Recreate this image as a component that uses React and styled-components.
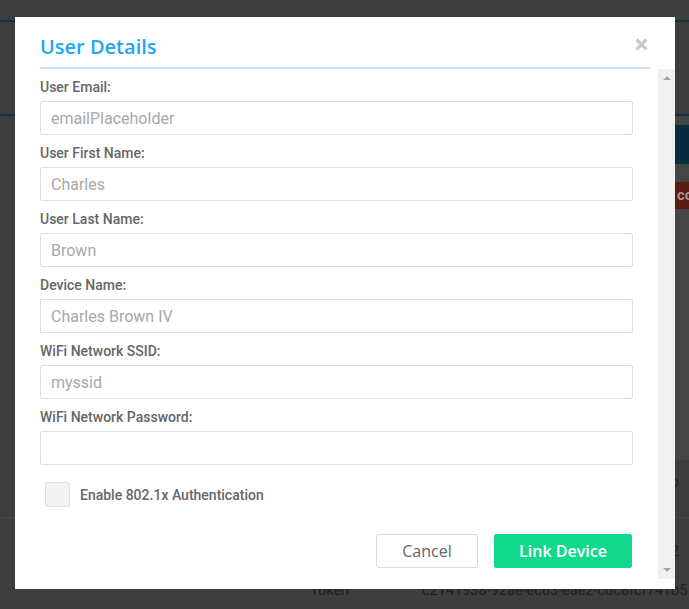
import React from "react";
import styled, { createGlobalStyle } from "styled-components";

const GlobalStyle = createGlobalStyle`
  html, body {
    margin: 0;
    padding: 0;
    background: #3d3d3d;
    overflow: hidden;
  }
  * {
    box-sizing: border-box;
  }
`;

/* the page that lies under the dimmed overlay */
const Page = styled.div`
  width: 100%;
  height: 609px;
  overflow: hidden;
  font-family: Roboto, "Liberation Sans", sans-serif;
  color: #202020;
`;
const TopBar = styled.div`
  height: 22px;
  border-bottom: 2px solid #0c3445;
`;
const Hero = styled.div`
  height: 94px;
  border-bottom: 2px solid #0c3445;
`;
const Main = styled.div`
  display: flex;
  justify-content: flex-end;
  height: 344px;
`;
const Side = styled.div`
  width: 90px;
  margin-right: -76px;
  background: #454545;
  padding-top: 9px;
  display: flex;
  flex-direction: column;
  gap: 18px;
`;
const SideBand = styled.div`
  height: ${(p) => p.$h}px;
  line-height: ${(p) => p.$h}px;
  background: ${(p) => p.$color};
  color: #a8948f;
  font-weight: 700;
  font-size: 15px;
  padding-left: 2px;
  white-space: nowrap;
`;
const Table = styled.div`
  display: flex;
  flex-direction: column;
`;
const Row = styled.div`
  display: grid;
  grid-template-columns: 422px 257px;
  height: ${(p) => p.$h}px;
  padding-top: ${(p) => p.$pt}px;
  border-bottom: ${(p) => (p.$line ? "1px solid #3f4b54" : "none")};
  font-size: 14.5px;
  line-height: 17px;
  white-space: nowrap;
`;
const Cell = styled.div`
  padding-left: ${(p) => p.$pl || 0}px;
  text-align: ${(p) => (p.$right ? "right" : "left")};
`;

/* modal */
const Overlay = styled.div`
  position: fixed;
  inset: 0;
  padding: 17px 0 0 15px;
`;
const Modal = styled.div`
  width: 660px;
  height: 572px;
  background: #fff;
  display: flex;
  flex-direction: column;
`;
const Header = styled.div`
  position: relative;
  margin: 0 25px;
  padding: 16px 0 6px;
  border-bottom: 2px solid #c6e7fb;
`;
const Title = styled.h2`
  margin: 0;
  font-family: "Open Sans", sans-serif;
  font-weight: 600;
  font-size: 20px;
  line-height: 28px;
  color: #22a6ef;
`;
const Close = styled.button`
  position: absolute;
  right: 2px;
  top: 21px;
  width: 13px;
  height: 13px;
  padding: 0;
  border: none;
  background: none;
  display: flex;
`;
const BodyWrap = styled.div`
  display: flex;
  height: 510px;
`;
const Body = styled.div`
  flex: 1;
  padding: 8px 25px 0 25px;
  display: flex;
  flex-direction: column;
`;
const Field = styled.div`
  display: flex;
  flex-direction: column;
  margin-bottom: 8px;
`;
const Label = styled.label`
  font-family: Roboto, sans-serif;
  font-weight: 500;
  font-size: 14px;
  line-height: 20px;
  color: #666;
  margin-bottom: 4px;
`;
const Input = styled.input`
  height: 34px;
  width: 100%;
  border: 1px solid #dedede;
  border-radius: 2px;
  padding: 0 10px;
  font-family: Roboto, sans-serif;
  font-size: 16px;
  color: #444;
  outline: none;
  &::placeholder {
    color: #a8a8a8;
  }
`;
const CheckRow = styled.div`
  display: flex;
  align-items: center;
  gap: 10px;
  margin: 9px 0 0 5px;
`;
const CheckBox = styled.span`
  width: 25px;
  height: 25px;
  background: #f3f3f3;
  border: 1px solid #e0e0e0;
  border-radius: 2px;
`;
const CheckLabel = styled.span`
  font-family: Roboto, sans-serif;
  font-weight: 500;
  font-size: 14px;
  color: #666;
`;
const Actions = styled.div`
  display: flex;
  justify-content: flex-end;
  gap: 16px;
  margin: 27px 1px 0 0;
`;
const Button = styled.button`
  height: 34px;
  width: ${(p) => p.$w}px;
  border-radius: 2px;
  font-family: "Open Sans", sans-serif;
  font-size: 16px;
  font-weight: ${(p) => (p.$primary ? 600 : 400)};
  color: ${(p) => (p.$primary ? "#fff" : "#666")};
  background: ${(p) => (p.$primary ? "#12d88e" : "#fff")};
  border: 1px solid ${(p) => (p.$primary ? "#12d88e" : "#dcdcdc")};
  padding: 0;
`;
const ScrollTrack = styled.div`
  width: 17px;
  background: #f0f0f0;
  display: flex;
  flex-direction: column;
  justify-content: space-between;
  align-items: center;
  padding: 7px 0;
`;
const Arrow = styled.span`
  width: 0;
  height: 0;
  border-left: 4px solid transparent;
  border-right: 4px solid transparent;
  ${(p) =>
    p.$down
      ? "border-top: 4px solid #a3a3a3;"
      : "border-bottom: 4px solid #a3a3a3;"}
`;

const fields = [
  { label: "User Email:", placeholder: "emailPlaceholder" },
  { label: "User First Name:", placeholder: "Charles" },
  { label: "User Last Name:", placeholder: "Brown" },
  { label: "Device Name:", placeholder: "Charles Brown IV" },
  { label: "WiFi Network SSID:", placeholder: "myssid" },
  { label: "WiFi Network Password:", placeholder: "", type: "password" },
];

export default function App() {
  return (
    <>
      <GlobalStyle />
      <Page>
        <TopBar />
        <Hero />
        <Main>
          <Side>
            <SideBand $color="#062d3d" $h={39} />
            <SideBand $color="#5b1b10" $h={27}>
              co
            </SideBand>
          </Side>
        </Main>
        <Table>
          <Row $h={58} $pt={14} $line>
            <Cell />
            <Cell $right>Connected to demo</Cell>
          </Row>
          <Row $h={58} $pt={25}>
            <Cell />
            <Cell $right>00000002</Cell>
          </Row>
          <Row $h={33} $pt={6}>
            <Cell $pl={310}>Token</Cell>
            <Cell>c2141938-92ae-ec63-eae2-cdc8fcf741b5</Cell>
          </Row>
        </Table>
      </Page>

      <Overlay>
        <Modal>
          <Header>
            <Title>User Details</Title>
            <Close aria-label="close">
              <svg width="13" height="13" viewBox="0 0 13 13">
                <path
                  d="M1.5 1.5 L11.5 11.5 M11.5 1.5 L1.5 11.5"
                  stroke="#c9c9c9"
                  strokeWidth="3.2"
                />
              </svg>
            </Close>
          </Header>
          <BodyWrap>
            <Body>
              {fields.map((f) => (
                <Field key={f.label}>
                  <Label>{f.label}</Label>
                  <Input type={f.type || "text"} placeholder={f.placeholder} />
                </Field>
              ))}
              <CheckRow>
                <CheckBox />
                <CheckLabel>Enable 802.1x Authentication</CheckLabel>
              </CheckRow>
              <Actions>
                <Button $w={102}>Cancel</Button>
                <Button $w={138} $primary>
                  Link Device
                </Button>
              </Actions>
            </Body>
            <ScrollTrack>
              <Arrow />
              <Arrow $down />
            </ScrollTrack>
          </BodyWrap>
        </Modal>
      </Overlay>
    </>
  );
}
